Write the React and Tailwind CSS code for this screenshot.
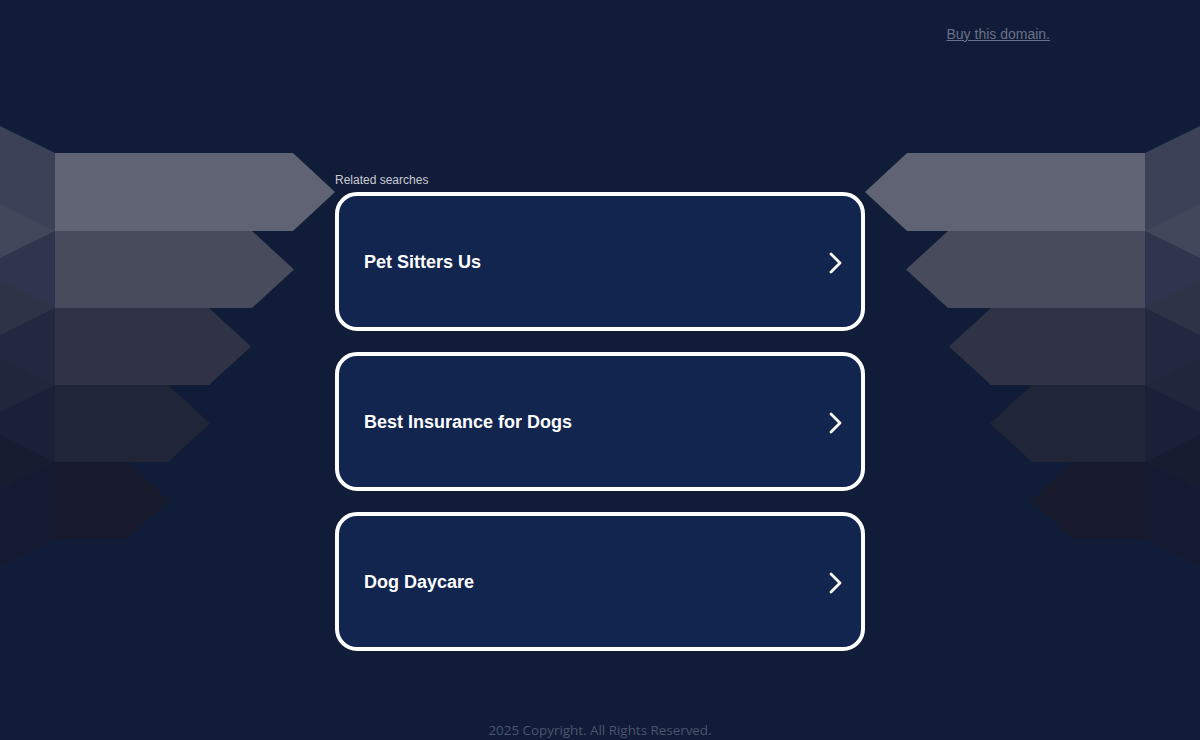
import React from "react";

const rows = [
  { t: 153, b: 231, r: 293, c: "#5f6373" },
  { t: 231, b: 308, r: 252, c: "#474b5c" },
  { t: 308, b: 385, r: 209, c: "#2f3345" },
  { t: 385, b: 462, r: 168, c: "#212538" },
  { t: 462, b: 539, r: 127, c: "#161a2c" },
];

function Side() {
  return (
    <g>
      {rows.map((row, i) => {
        const m = (row.t + row.b) / 2;
        return (
          <g key={i}>
            <polygon
              points={`55,${row.t} 0,${row.t - 27} 0,${row.b + 27} 55,${row.b}`}
              fill={row.c}
              opacity="0.55"
            />
            <polygon
              points={`55,${row.t} ${row.r},${row.t} ${row.r + 42},${m} ${row.r},${row.b} 55,${row.b}`}
              fill={row.c}
            />
          </g>
        );
      })}
    </g>
  );
}

function Chevron() {
  return (
    <svg width="16" height="22" viewBox="0 0 16 22" fill="none">
      <polyline
        points="3,2 12,11 3,20"
        stroke="white"
        strokeWidth="2.8"
        strokeLinecap="round"
        strokeLinejoin="round"
      />
    </svg>
  );
}

const items = ["Pet Sitters Us", "Best Insurance for Dogs", "Dog Daycare"];

export default function App() {
  return (
    <div className="relative w-full min-h-[740px] overflow-hidden bg-[#101c38] font-['Liberation_Sans',Arial,sans-serif]">
      <svg
        className="absolute inset-0 pointer-events-none"
        width="1200"
        height="740"
        viewBox="0 0 1200 740"
      >
        <Side />
        <g transform="translate(1200,0) scale(-1,1)">
          <Side />
        </g>
      </svg>

      <div className="relative flex flex-col min-h-[740px]">
        <header className="flex justify-end pr-[150px] pt-[26px] h-[42px]">
          <a href="#" className="text-[14px] leading-[16px] text-[#6b7189] underline">
            Buy this domain.
          </a>
        </header>

        <main className="w-[530px] mx-auto mt-[131px]">
          <div className="text-[12px] leading-[14px] text-[#c9ccd4] mb-[5px]">Related searches</div>
          <div className="flex flex-col gap-[21px]">
            {items.map((t) => (
              <a
                key={t}
                href="#"
                className="flex items-center justify-between h-[139px] rounded-[22px] border-4 border-white bg-[#11254f] pl-[25px] pr-[17px] pt-[2px]"
              >
                <span className="text-[18px] font-bold text-white">{t}</span>
                <Chevron />
              </a>
            ))}
          </div>
        </main>

        <footer className="mt-auto pb-[1px] text-center text-[13.4px] leading-[18px] text-[#4d546d] font-['Open_Sans',sans-serif]">
          2025 Copyright. All Rights Reserved.
        </footer>
      </div>
    </div>
  );
}
